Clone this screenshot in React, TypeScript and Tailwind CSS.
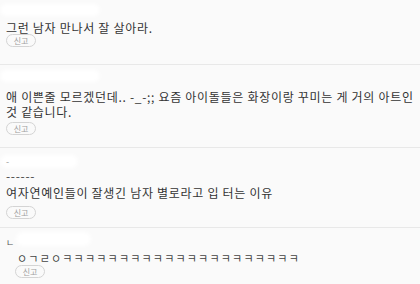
const font = { fontFamily: '"Noto Sans CJK KR", "Noto Sans", sans-serif' };

const ReportButton = ({ className = '' }: { className?: string }) => (
  <div
    className={`w-[30px] h-[13px] rounded-full border border-[#d4d4d4] bg-[#fafafa] flex items-center justify-center text-[8px] leading-none text-[#a0a0a0] ${className}`}
  >
    신고
  </div>
);

const Blur = ({ className = '' }: { className?: string }) => (
  <div className={`bg-white rounded-full blur-[2px] ${className}`} />
);

export default function App() {
  return (
    <div className="w-[420px] h-[284px] bg-[#fafafa] overflow-hidden text-[#333]" style={font}>
      {/* comment 1 */}
      <div className="h-[65px] px-[6px] pt-[4px] border-b border-[#e8e8e8]">
        <Blur className="w-[100px] h-[12px] -ml-[6px]" />
        <p className="mt-[5px] text-[12px] leading-[13px] tracking-[0.7px]">그런 남자 만나서 잘 살아라.</p>
        <ReportButton />
      </div>

      {/* comment 2 */}
      <div className="h-[83px] px-[6px] pt-[5px] border-b border-[#e8e8e8]">
        <Blur className="w-[100px] h-[12px] -ml-[6px]" />
        <p className="mt-[7px] text-[12px] leading-[15px] tracking-[0.7px] break-keep">
          애 이쁜줄 모르겠던데.. -_-;; 요즘 아이돌들은 화장이랑 꾸미는 게 거의 아트인 것 같습니다.
        </p>
        <ReportButton className="mt-[3px]" />
      </div>

      {/* comment 3 */}
      <div className="h-[80px] px-[6px] pt-[7px] border-b border-[#e8e8e8]">
        <div className="relative h-[14px]">
          <Blur className="w-[78px] h-[13px] -ml-[6px]" />
          <span className="absolute left-0 top-[2px] text-[9px] leading-none text-[#999]">-</span>
        </div>
        <p className="text-[12px] leading-[14px] tracking-[0.7px] text-[#444]">------</p>
        <p className="mt-[2px] text-[12px] leading-[15px] tracking-[0.7px]">여자연예인들이 잘생긴 남자 별로라고 입 터는 이유</p>
        <ReportButton className="mt-[6px]" />
      </div>

      {/* reply */}
      <div className="px-[6px] pt-[3px]">
        <div className="flex items-center h-[16px]">
          <span className="text-[9px] leading-none text-[#555] mt-[6px]">ㄴ</span>
          <Blur className="ml-[2px] w-[75px] h-[14px]" />
        </div>
        <div className="pl-[11px]">
          <p className="mt-[5px] text-[11px] leading-[12px] tracking-[1.2px] text-[#444]">
            ㅇㄱㄹㅇㅋㅋㅋㅋㅋㅋㅋㅋㅋㅋㅋㅋㅋㅋㅋㅋㅋㅋㅋㅋㅋ
          </p>
          <ReportButton className="mt-[1px] -ml-[2px]" />
        </div>
      </div>
    </div>
  );
}
